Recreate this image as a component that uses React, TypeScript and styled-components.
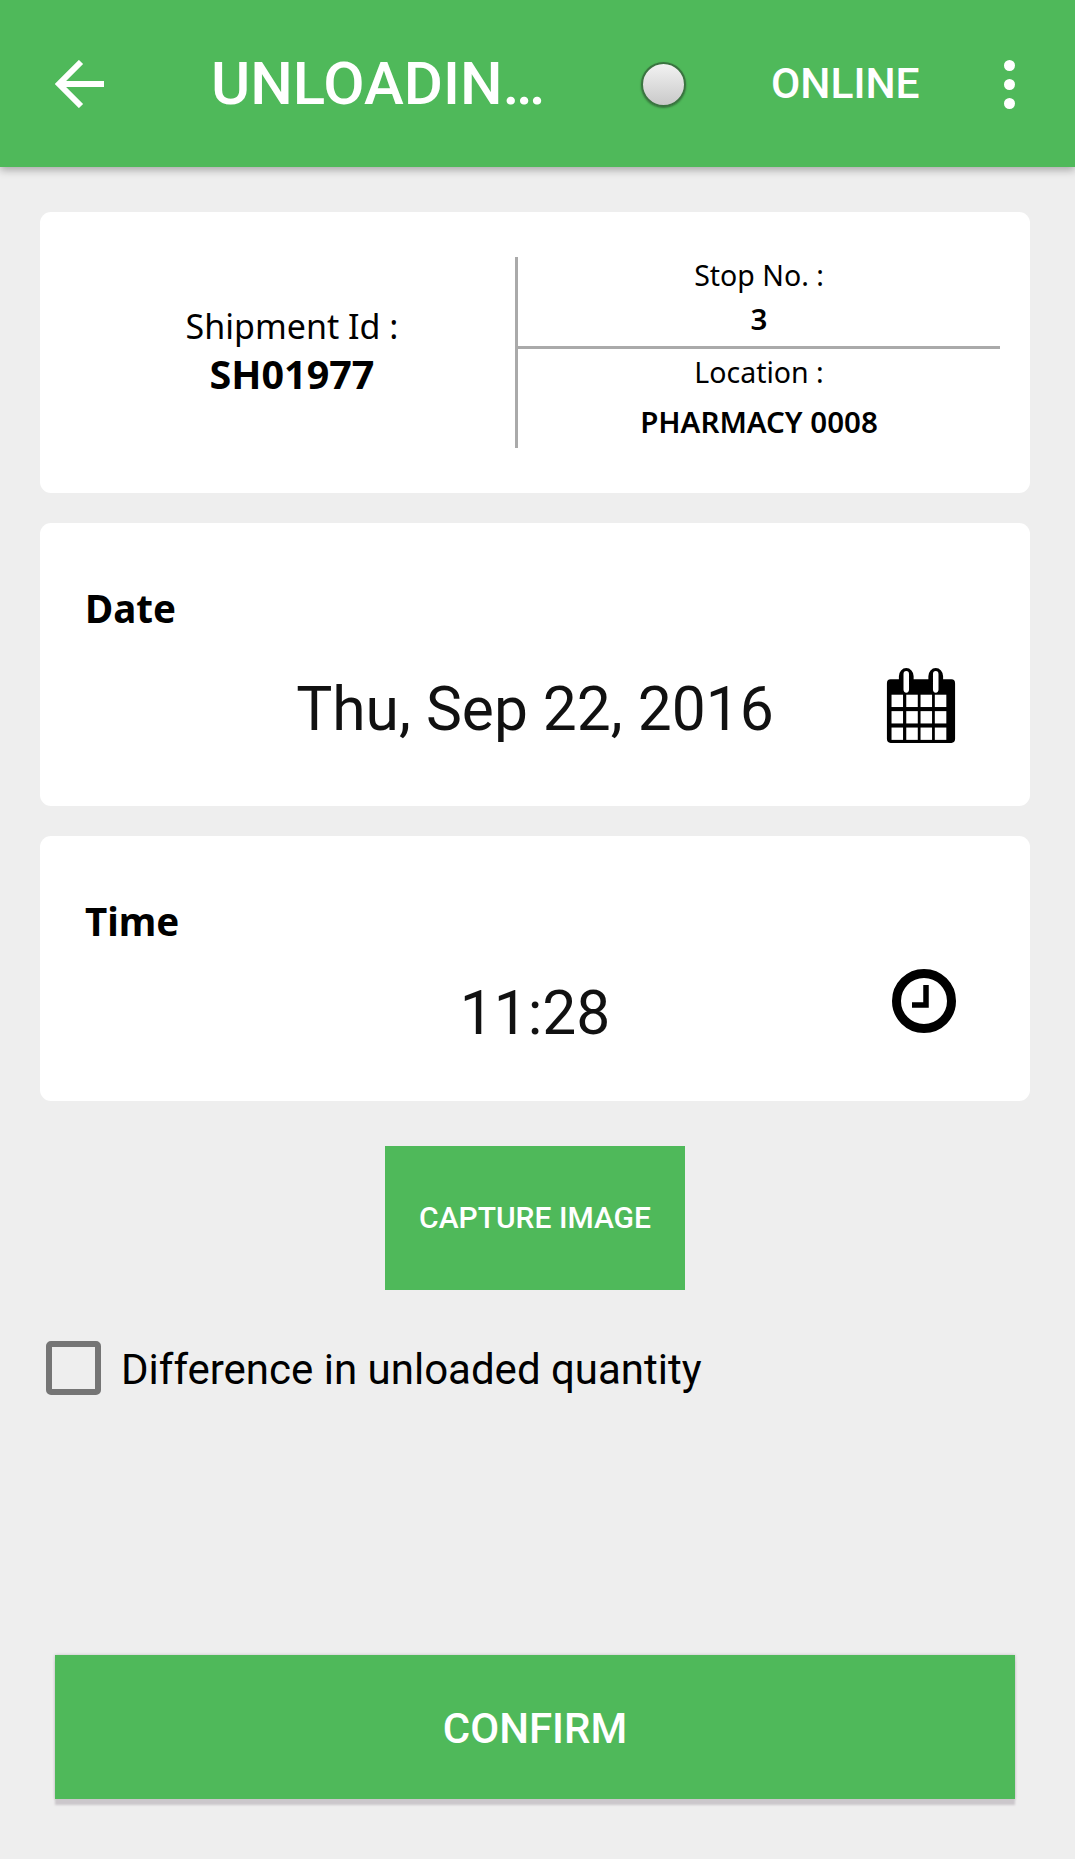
import React from "react";
import styled, { createGlobalStyle } from "styled-components";

const GREEN = "#4fb95a";
const CARD_FONT = `"Noto Sans", "Open Sans", sans-serif`;

const Global = createGlobalStyle`
  html, body { margin: 0; padding: 0; background: #eeeeee; }
  * { box-sizing: border-box; }
  body { font-family: Roboto, sans-serif; color: #000; }
`;

const Page = styled.div`
  width: 1075px;
  height: 1859px;
  display: flex;
  flex-direction: column;
  background: #eeeeee;
  overflow: hidden;
`;

const Toolbar = styled.header`
  height: 167px;
  flex: none;
  background: ${GREEN};
  box-shadow: 0 3px 8px rgba(0, 0, 0, 0.3);
  display: flex;
  align-items: center;
  color: #fff;
  padding-left: 55px;
  padding-top: 1px;
`;

const BackButton = styled.svg`
  width: 50px;
  height: 48px;
  flex: none;
`;

const Title = styled.h1`
  margin: 0 0 0 106px;
  width: 330px;
  flex: none;
  font: 500 60px/1 Roboto, sans-serif;
  white-space: nowrap;
`;

const Radio = styled.span`
  width: 45px;
  height: 45px;
  flex: none;
  margin-left: 100px;
  border-radius: 50%;
  border: 2px solid #3a7440;
  background: linear-gradient(#f2f2f2, #c9c9c9);
  box-shadow: 0 1px 2px rgba(0, 0, 0, 0.35);
`;

const Status = styled.span`
  margin-left: 85px;
  width: 147px;
  flex: none;
  font: 500 42.5px/1 Roboto, sans-serif;
`;

const Overflow = styled.div`
  margin-left: 86px;
  display: flex;
  flex-direction: column;
  gap: 8px;
`;

const Dot = styled.i`
  display: block;
  width: 11px;
  height: 11px;
  border-radius: 50%;
  background: #fff;
`;

const Content = styled.main`
  flex: 1;
  display: flex;
  flex-direction: column;
  padding: 45px 45px 0 40px;
`;

const Card = styled.section<{ $h: number; $gap: number }>`
  height: ${(p) => p.$h}px;
  margin-bottom: ${(p) => p.$gap}px;
  flex: none;
  background: #fff;
  border-radius: 11px;
  position: relative;
`;

const SummaryCard = styled(Card)`
  display: flex;
  padding: 45px 30px 45px 0;
  font-family: ${CARD_FONT};
`;

const ShipmentBlock = styled.div`
  width: 475px;
  flex: none;
  display: flex;
  flex-direction: column;
  align-items: center;
  justify-content: center;
  padding: 0 0 0 29px;
`;

const SummaryLabel = styled.div<{ $size: number; $below?: number }>`
  font-size: ${(p) => p.$size}px;
  line-height: 1.2;
  white-space: nowrap;
  margin-bottom: ${(p) => p.$below ?? 0}px;
`;

const ShipmentValue = styled.div`
  font-size: 39.5px;
  font-weight: 700;
  line-height: 50px;
`;

const StopBlock = styled.div`
  flex: 1;
  border-left: 3px solid #aaaaaa;
  display: flex;
  flex-direction: column;
`;

const StopRow = styled.div<{ $h: number; $pad: number; $gap: number; $line?: boolean }>`
  height: ${(p) => p.$h}px;
  display: flex;
  flex-direction: column;
  align-items: center;
  padding-top: ${(p) => p.$pad}px;
  gap: ${(p) => p.$gap}px;
  ${(p) => (p.$line ? "border-bottom: 3px solid #aaaaaa;" : "")}
`;

const StopValue = styled.div`
  font-size: 29.5px;
  font-weight: 600;
  line-height: 1.2;
  white-space: nowrap;
`;

const FieldCard = styled(Card)`
  padding: 66px 45px 0 45px;
`;

const FieldLabel = styled.div`
  font: 700 38.5px/1 ${CARD_FONT};
`;

const FieldRow = styled.div<{ $top: number }>`
  display: flex;
  align-items: center;
  justify-content: center;
  margin-top: ${(p) => p.$top}px;
  position: relative;
`;

const FieldValue = styled.div`
  font: 400 60.5px/70px Roboto, sans-serif;
  color: #111;
`;

const FieldIcon = styled.svg<{ $w: number; $h: number; $dy: number; $right: number }>`
  position: absolute;
  right: ${(p) => p.$right}px;
  top: ${(p) => p.$dy}px;
  width: ${(p) => p.$w}px;
  height: ${(p) => p.$h}px;
`;

const CaptureButton = styled.button`
  align-self: center;
  width: 300px;
  height: 144px;
  margin: 0 0 50px 0;
  border: 0;
  background: ${GREEN};
  color: #fff;
  font: 500 30px/1 Roboto, sans-serif;
  flex: none;
`;

const CheckRow = styled.label`
  display: flex;
  align-items: flex-start;
  padding-left: 6px;
  gap: 20px;
`;

const CheckText = styled.span`
  margin-top: 2px;
  font: 400 42px/56px Roboto, sans-serif;
`;

const CheckBox = styled.span`
  width: 55px;
  height: 54px;
  margin-top: 1px;
  flex: none;
  border: 6px solid #757575;
  border-radius: 5px;
`;

const ConfirmButton = styled.button`
  flex: none;
  margin: auto 15px 60px 15px;
  height: 144px;
  padding: 4px 0 0;
  border: 0;
  background: ${GREEN};
  color: #fff;
  font: 500 42px/1 Roboto, sans-serif;
  box-shadow: 0 6px 2px #cbc7cb, 0 0 3px rgba(0, 0, 0, 0.2);
`;

const CalendarGlyph = () => (
  <FieldIcon $w={70} $h={78} $dy={-8} $right={29} viewBox="0 0 76 76" preserveAspectRatio="none">
    <path
      fillRule="evenodd"
      d="M5 12h9V9a8 8 0 0 1 16 0v3h16V9a8 8 0 0 1 16 0v3h9a4 4 0 0 1 4 4v54a4 4 0 0 1-4 4H5a4 4 0 0 1-4-4V16a4 4 0 0 1 4-4zM19 7v15a3 3 0 0 0 6 0V7a3 3 0 0 0-6 0zM51 7v15a3 3 0 0 0 6 0V7a3 3 0 0 0-6 0z"
      fill="#000"
    />
    <g fill="#fff">
      {[6, 22, 37.5, 53].map((x) =>
        [27, 43, 59].map((y) => <rect key={`${x}-${y}`} x={x} y={y} width="12.5" height="12" />)
      )}
    </g>
  </FieldIcon>
);

const ClockGlyph = () => (
  <FieldIcon $w={66} $h={66} $dy={-11} $right={28} viewBox="0 0 66 66">
    <circle cx="33" cy="33" r="27.5" fill="none" stroke="#000" strokeWidth="9" />
    <path d="M35 17v20H21" fill="none" stroke="#000" strokeWidth="5.5" />
  </FieldIcon>
);

export default function App() {
  return (
    <Page>
      <Global />
      <Toolbar>
        <BackButton viewBox="0 0 50 48">
          <path d="M49 24H5M26 2 4 24l22 22" fill="none" stroke="#fff" strokeWidth="6" />
        </BackButton>
        <Title>UNLOADIN…</Title>
        <Radio />
        <Status>ONLINE</Status>
        <Overflow>
          <Dot />
          <Dot />
          <Dot />
        </Overflow>
      </Toolbar>
      <Content>
        <SummaryCard $h={281} $gap={30}>
          <ShipmentBlock>
            <SummaryLabel $size={34} $below={2}>Shipment Id :</SummaryLabel>
            <ShipmentValue>SH01977</ShipmentValue>
          </ShipmentBlock>
          <StopBlock>
            <StopRow $h={92} $pad={1} $gap={9} $line>
              <SummaryLabel $size={28.5}>Stop No. :</SummaryLabel>
              <StopValue>3</StopValue>
            </StopRow>
            <StopRow $h={99} $pad={6} $gap={15}>
              <SummaryLabel $size={28.5}>Location :</SummaryLabel>
              <StopValue>PHARMACY 0008</StopValue>
            </StopRow>
          </StopBlock>
        </SummaryCard>
        <FieldCard $h={283} $gap={30}>
          <FieldLabel>Date</FieldLabel>
          <FieldRow $top={47}>
            <FieldValue>Thu, Sep 22, 2016</FieldValue>
            <CalendarGlyph />
          </FieldRow>
        </FieldCard>
        <FieldCard $h={265} $gap={45}>
          <FieldLabel>Time</FieldLabel>
          <FieldRow $top={38}>
            <FieldValue>11:28</FieldValue>
            <ClockGlyph />
          </FieldRow>
        </FieldCard>
        <CaptureButton>CAPTURE IMAGE</CaptureButton>
        <CheckRow>
          <CheckBox />
          <CheckText>Difference in unloaded quantity</CheckText>
        </CheckRow>
        <ConfirmButton>CONFIRM</ConfirmButton>
      </Content>
    </Page>
  );
}
